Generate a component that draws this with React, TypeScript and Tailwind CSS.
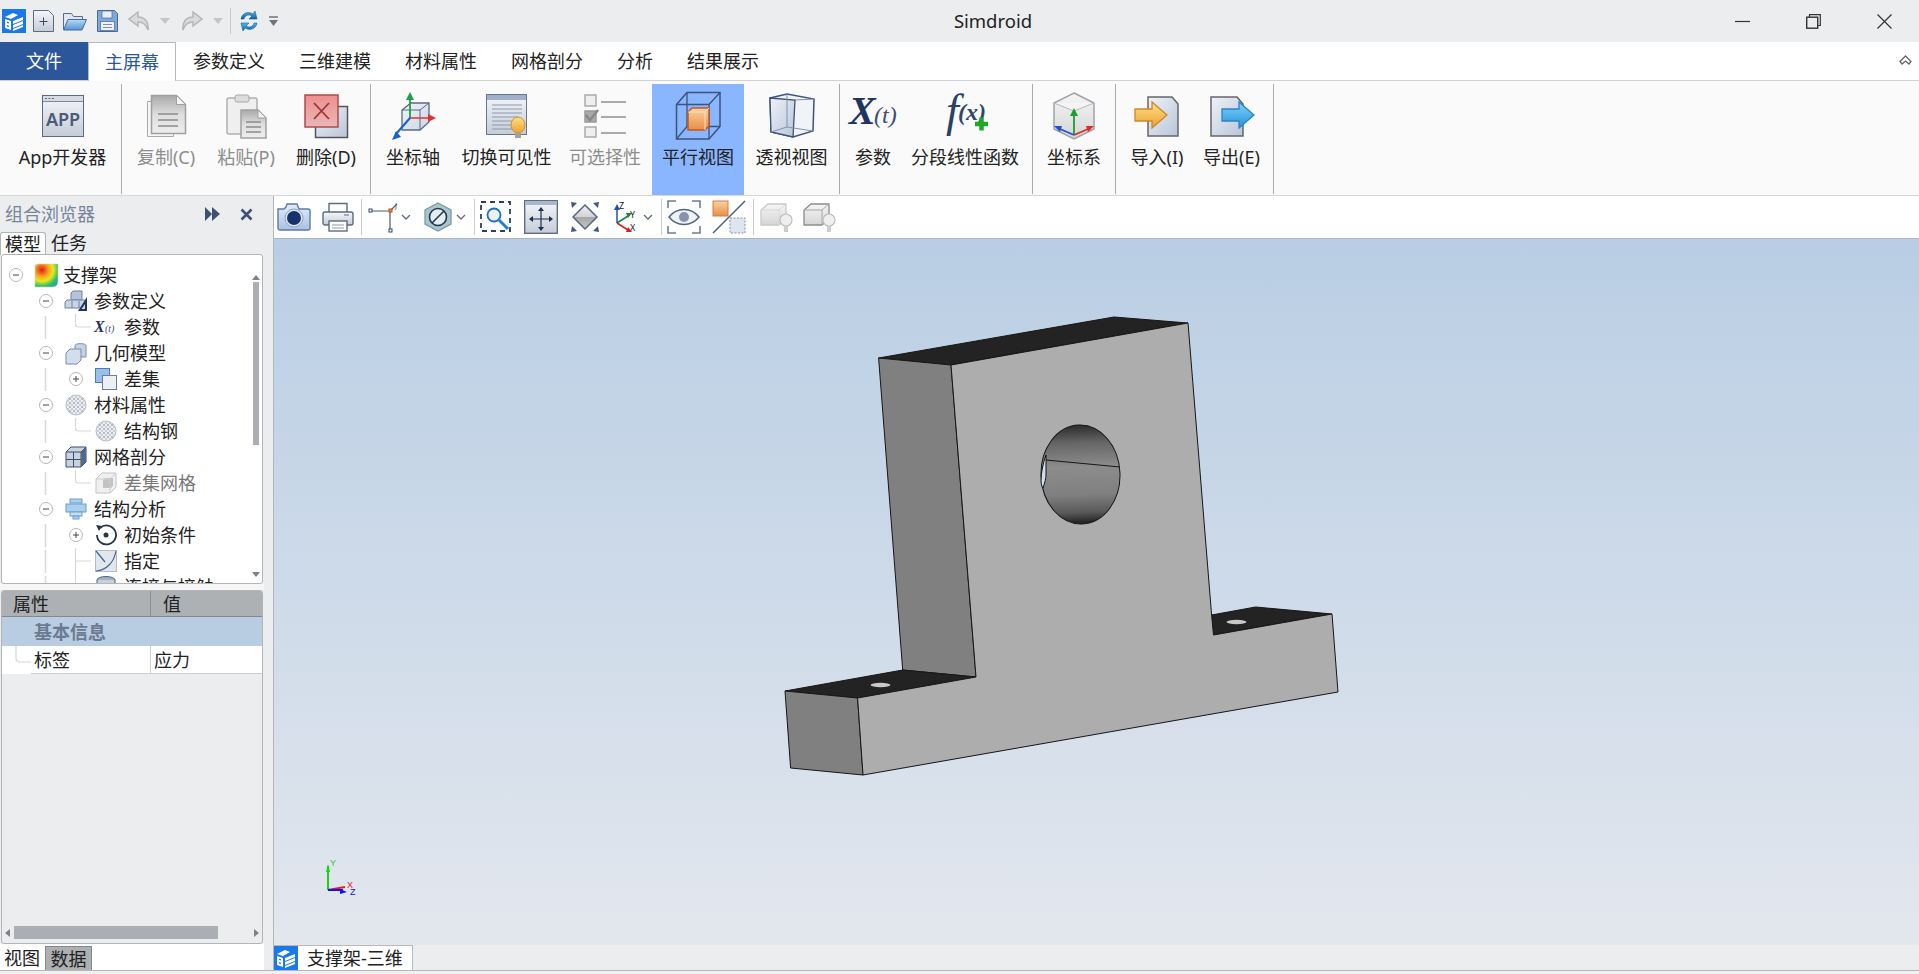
import React from "react";

const EDGE = "#5b6b86";

const Defs = () => (
  <svg width="0" height="0" className="absolute">
    <defs>
      <linearGradient id="gPaper" x1="0" y1="0" x2="0" y2="1">
        <stop offset="0" stopColor="#f4f6f9" />
        <stop offset="1" stopColor="#c5ccd8" />
      </linearGradient>
      <linearGradient id="gGray" x1="0" y1="0" x2="0" y2="1">
        <stop offset="0" stopColor="#a9a9a9" />
        <stop offset="0.5" stopColor="#dedede" />
        <stop offset="1" stopColor="#eeeeee" />
      </linearGradient>
      <linearGradient id="gLight" x1="0" y1="0" x2="0" y2="1">
        <stop offset="0" stopColor="#f6f6f6" />
        <stop offset="1" stopColor="#d5d5d5" />
      </linearGradient>
      <linearGradient id="gRed" x1="0" y1="0" x2="0" y2="1">
        <stop offset="0" stopColor="#ee8f8f" />
        <stop offset="1" stopColor="#e9b7b7" />
      </linearGradient>
      <linearGradient id="gOrange" x1="0" y1="0" x2="0" y2="1">
        <stop offset="0" stopColor="#f8d3a5" />
        <stop offset="1" stopColor="#ea8d45" />
      </linearGradient>
      <linearGradient id="gArrow" x1="0" y1="0" x2="0" y2="1">
        <stop offset="0" stopColor="#fde08a" />
        <stop offset="1" stopColor="#f0a030" />
      </linearGradient>
      <linearGradient id="gArrowBlue" x1="0" y1="0" x2="0" y2="1">
        <stop offset="0" stopColor="#7fd4f7" />
        <stop offset="1" stopColor="#2790dc" />
      </linearGradient>
      <linearGradient id="gGlass" x1="0" y1="0" x2="1" y2="1">
        <stop offset="0" stopColor="#eef2f8" />
        <stop offset="1" stopColor="#b8c5d9" />
      </linearGradient>
      <linearGradient id="gCam" x1="0" y1="0" x2="0" y2="1">
        <stop offset="0" stopColor="#e3ecf8" />
        <stop offset="1" stopColor="#a9c2e2" />
      </linearGradient>
      <linearGradient id="gFolder" x1="0" y1="0" x2="0" y2="1">
        <stop offset="0" stopColor="#bcd8f2" />
        <stop offset="1" stopColor="#4f97d6" />
      </linearGradient>
      <linearGradient id="gSync" x1="0" y1="0" x2="0" y2="1">
        <stop offset="0" stopColor="#4dc0ea" />
        <stop offset="1" stopColor="#155f9f" />
      </linearGradient>
      <linearGradient id="gDiamond" x1="0" y1="0" x2="0" y2="1">
        <stop offset="0" stopColor="#f2f2f2" />
        <stop offset="0.5" stopColor="#d2d2d2" />
        <stop offset="0.5" stopColor="#a5a5a5" />
        <stop offset="1" stopColor="#c8c8c8" />
      </linearGradient>
      <linearGradient id="gHole" x1="0" y1="0" x2="0" y2="1">
        <stop offset="0" stopColor="#2c2c2c" />
        <stop offset="0.18" stopColor="#666666" />
        <stop offset="0.42" stopColor="#8c8c8c" />
        <stop offset="0.7" stopColor="#808080" />
        <stop offset="0.88" stopColor="#5a5a5a" />
        <stop offset="1" stopColor="#1c1c1c" />
      </linearGradient>
      <radialGradient id="gHeat" cx="0.3" cy="0.25" r="1">
        <stop offset="0" stopColor="#e8141c" />
        <stop offset="0.3" stopColor="#f6a81c" />
        <stop offset="0.5" stopColor="#e8e820" />
        <stop offset="0.72" stopColor="#30c060" />
        <stop offset="1" stopColor="#2090e8" />
      </radialGradient>
      <pattern id="pDots" width="4" height="4" patternUnits="userSpaceOnUse">
        <rect width="4" height="4" fill="#eceef2" />
        <rect width="2" height="2" fill="#b7bdc8" />
        <rect x="2" y="2" width="2" height="2" fill="#c9ced7" />
      </pattern>
    </defs>
  </svg>
);

const Logo = ({ size = 24 }: { size?: number }) => (
  <svg width={size} height={size} viewBox="0 0 24 24" className="block shrink-0">
    <rect width="24" height="24" fill="#1a78e8" />
    <path d="M3 8 11 4l5 2-7 4z" fill="#fff" />
    <path d="M3 10l6 2v9l-6-2z" fill="#fff" />
    <path d="M11 12l10-4v3l-10 4zM11 16l10-4v3l-10 4zM11 20l10-4v2l-10 4z" fill="#fff" />
    <path d="M5 12.5l2 .7v1.4l-2-.7zM5 16l2 .7v1.4l-2-.7z" fill="#1a78e8" />
  </svg>
);

/* ---------- title bar icons ---------- */
const NewIcon = () => (
  <svg width="21" height="22" viewBox="0 0 21 22" className="block">
    <path d="M.5.5h15l5 5v16H.5z" fill="url(#gPaper)" stroke={EDGE} />
    <path d="M10.5 7.5v8M6.5 11.5h8" stroke="#3a4a66" />
  </svg>
);
const OpenIcon = () => (
  <svg width="24" height="20" viewBox="0 0 24 20" className="block">
    <path d="M.5 18V2.500h8l2 3h9V9" fill="#dfe7f2" stroke={EDGE} />
    <path d="M.5 19 5 8.500h18.500L19 19z" fill="url(#gFolder)" stroke="#3f6d9e" />
  </svg>
);
const SaveIcon = () => (
  <svg width="21" height="22" viewBox="0 0 21 22" className="block">
    <path d="M.5.5h17l3 3v18H.5z" fill="#7fa9d9" stroke="#46699a" />
    <rect x="5" y="1" width="10" height="7" fill="#e9eff7" stroke="#46699a" strokeWidth=".7" />
    <rect x="3.5" y="11.5" width="14" height="9" fill="#eef2f7" stroke="#46699a" strokeWidth=".7" />
    <path d="M6 14.5h9M6 17.5h9" stroke="#8090a8" />
  </svg>
);
const UndoIcon = ({ flip = false }: { flip?: boolean }) => (
  <svg width="22" height="20" viewBox="0 0 22 20" className={flip ? "block -scale-x-100" : "block"}>
    <path d="M10 1 1 8l9 7v-4c4 0 8 2 10 8 1-8-3-13-10-13z" fill="#d9dadc" stroke="#b5b6b9" strokeWidth="1.5" />
  </svg>
);
const DropArrow = () => (
  <svg width="10" height="6" viewBox="0 0 10 6" className="block">
    <path d="M0 0h10L5 6z" fill="#c4c5c8" />
  </svg>
);
const SyncIcon = () => (
  <svg width="20" height="24" viewBox="0 0 20 24" className="block">
    <path d="M2 10C3 4 9 2 14 5l2-3 2 8-8 0 3-3c-3-2-7-1-8 3z" fill="url(#gSync)" stroke="#125a96" strokeWidth=".6" />
    <path d="M18 14c-1 6-7 8-12 5l-2 3-2-8 8 0-3 3c3 2 7 1 8-3z" fill="url(#gSync)" stroke="#125a96" strokeWidth=".6" />
  </svg>
);
const MoreIcon = () => (
  <svg width="9" height="11" viewBox="0 0 9 11" className="block">
    <path d="M0 1h9" stroke="#70737a" strokeWidth="1.5" />
    <path d="M0 4h9L4.5 10z" fill="#70737a" />
  </svg>
);

/* ---------- ribbon icons, all on a 46px box ---------- */
const AppIcon = () => (
  <svg width="46" height="46" viewBox="0 0 46 46">
    <rect x="2.5" y="2.5" width="41" height="41" fill="url(#gPaper)" stroke={EDGE} />
    <rect x="3" y="3" width="40" height="5" fill="#d6dbe4" />
    <path d="M5 5.5h2M8.5 5.5h2M12 5.5h2" stroke="#5b6b86" />
    <path d="M3 8.500h40" stroke="#7a88a0" />
    <text x="23" y="33" textAnchor="middle" fontSize="18" fontWeight="600" fill="#4a5a78" fontFamily="Noto Sans, sans-serif">APP</text>
  </svg>
);
const CopyIcon = () => (
  <svg width="46" height="46" viewBox="0 0 46 46">
    <path d="M4.5 8.5h26v35h-26z" fill="#f6f6f6" stroke="#aaa" />
    <path d="M8.5 2.5h25l9 9v29h-34z" fill="url(#gGray)" stroke="#a0a0a0" strokeWidth="1.5" />
    <path d="M33.5 2.5v9h9z" fill="#f4f4f4" stroke="#a0a0a0" />
    <path d="M15 21h20M15 27h20M15 33h20" stroke="#8c8c8c" strokeWidth="1.5" />
  </svg>
);
const PasteIcon = () => (
  <svg width="46" height="46" viewBox="0 0 46 46">
    <rect x="4" y="5" width="30" height="36" rx="2" fill="#efefef" stroke="#b0b0b0" strokeWidth="1.5" />
    <rect x="12" y="2" width="14" height="7" rx="2" fill="#dcdcdc" stroke="#a8a8a8" />
    <path d="M18 17h17l8 8v20H18z" fill="url(#gGray)" stroke="#a0a0a0" strokeWidth="1.5" />
    <path d="M35 17v8h8z" fill="#f4f4f4" stroke="#a0a0a0" />
    <path d="M23 29h15M23 34h15M23 39h15" stroke="#8c8c8c" strokeWidth="1.5" />
  </svg>
);
const DeleteIcon = () => (
  <svg width="46" height="46" viewBox="0 0 46 46">
    <rect x="12.5" y="13.5" width="32" height="31" fill="url(#gGlass)" stroke="#555" strokeWidth="1.5" />
    <rect x="2" y="2" width="33" height="32" fill="url(#gRed)" stroke="#b14a4a" strokeWidth="1.5" />
    <path d="M11 10l15 16M26 10 11 26" stroke="#9e3535" strokeWidth="1.8" />
  </svg>
);
const AxisIcon = () => (
  <svg width="46" height="50" viewBox="0 0 46 50">
    <path d="M12 19l9-7h18v19l-9 8H12z" fill="url(#gGlass)" fillOpacity=".7" stroke={EDGE} strokeWidth="1.3" />
    <path d="M12 19h18v20M30 19l9-7" fill="none" stroke={EDGE} />
    <path d="M20 27V8" stroke="#1aa048" strokeWidth="1.8" />
    <path d="M20 1l-4 8h8z" fill="#1aa048" />
    <path d="M20 27h20" stroke="#e03030" strokeWidth="1.5" />
    <path d="M46 27l-8-4v8z" fill="#e03030" />
    <path d="M20 27 6 43" stroke="#1c5fd0" strokeWidth="2" />
    <path d="M2 49l9-3-5-6z" fill="#1c5fd0" />
  </svg>
);
const VisibleIcon = () => (
  <svg width="46" height="46" viewBox="0 0 46 46">
    <rect x="2.5" y="1.5" width="40" height="40" fill="url(#gPaper)" stroke="#667690" />
    <rect x="3" y="2" width="39" height="5" fill="#9fb0c8" />
    <path d="M8 12h30M8 16h30M8 20h30M8 24h26M8 28h24M8 32h22M8 36h22" stroke="#8b98ad" />
    <ellipse cx="34" cy="32" rx="7" ry="8" fill="url(#gArrow)" stroke="#c9932a" />
    <rect x="31" y="40" width="6" height="5" fill="#a0a0a0" />
  </svg>
);
const SelectIcon = () => (
  <svg width="46" height="46" viewBox="0 0 46 46">
    <rect x="3" y="2" width="11" height="11" fill="#eee" stroke="#aaa" strokeWidth="1.5" />
    <rect x="3" y="18" width="11" height="11" fill="#aaa" stroke="#999" strokeWidth="1.5" />
    <path d="M4 22l4 5 8-10" fill="none" stroke="#888" strokeWidth="2.5" />
    <rect x="3" y="34" width="11" height="10" fill="#eee" stroke="#aaa" strokeWidth="1.5" />
    <path d="M19 9h25M19 24h25M19 40h25" stroke="#aaa" strokeWidth="1.8" />
  </svg>
);
const ParallelIcon = () => (
  <svg width="46" height="50" viewBox="0 0 46 50">
    <path d="M1.5 13.5 12 1.5h33v34L34 48H1.5z" fill="none" stroke="#3d5378" strokeWidth="1.5" />
    <path d="M1.5 13.5H34V48M34 13.5 45 1.5M1.5 48 12 35.5h33M12 1.5v34" fill="none" stroke="#3d5378" strokeWidth="1.3" />
    <path d="M13 21l4-4h17v18l-4 4H13z" fill="url(#gOrange)" stroke="#c8551f" strokeWidth="1.5" />
    <path d="M13 21h17v18M30 21l4-4" fill="none" stroke="#f4e0c8" />
  </svg>
);
const PerspectiveIcon = () => (
  <svg width="46" height="46" viewBox="0 0 46 46">
    <path d="M1 5 18 1l27 5-1 32-20 6-22-5z" fill="#f0f3f8" stroke="#3d5378" strokeWidth="1.5" />
    <path d="M1 5l25 2-2 37L2 39z" fill="url(#gGlass)" stroke="#3d5378" strokeWidth="1.3" />
    <path d="M26 7l19-1M18 1v33M2 39l16-5 26 4" fill="none" stroke="#8192ad" />
  </svg>
);
const XtIcon = ({ size = 46 }: { size?: number }) => (
  <svg width={size} height={size} viewBox="0 0 46 46" className="overflow-visible">
    <text x="-1" y="31" fontFamily="Liberation Serif, serif" fontStyle="italic" fontWeight="700" fontSize="40" fill="#1f3560">X</text>
    <text x="24" y="30" fontFamily="Liberation Serif, serif" fontStyle="italic" fontSize="24" fill="#3b4f78">(t)</text>
  </svg>
);
const FxIcon = () => (
  <svg width="50" height="46" viewBox="0 0 50 46" className="overflow-visible">
    <text x="6" y="33" fontFamily="Liberation Serif, serif" fontStyle="italic" fontSize="46" fill="#2d3f66">f</text>
    <text x="18" y="27" fontFamily="Liberation Serif, serif" fontStyle="italic" fontWeight="700" fontSize="24" fill="#33456c">(x)</text>
    <path d="M35 31h13M41.5 24.500v13" stroke="#1da82c" strokeWidth="4.5" />
  </svg>
);
const CoordIcon = () => (
  <svg width="46" height="48" viewBox="0 0 46 48">
    <path d="M23 1 43 11v26L23 47 3 37V11z" fill="url(#gLight)" stroke="#9ea3ab" strokeWidth="1.5" />
    <path d="M3 11l20 8 20-8" fill="#f5f5f5" stroke="#b5b8bd" />
    <path d="M23 43V22" stroke="#18a030" strokeWidth="1.8" />
    <path d="M23 16l-4 8h8z" fill="#18a030" />
    <path d="M23 43 9 37" stroke="#2050d0" strokeWidth="1.8" />
    <path d="M3 34l8-0-2 6z" fill="#2050d0" />
    <path d="M23 43 37 37" stroke="#e02828" strokeWidth="1.8" />
    <path d="M43 34l-8 0 2 6z" fill="#e02828" />
  </svg>
);
const ImportIcon = () => (
  <svg width="46" height="46" viewBox="0 0 46 46">
    <path d="M14 4h24l6 7v32H14z" fill="url(#gGlass)" stroke="#666" strokeWidth="1.5" />
    <path d="M1 16h17v-7l15 13-15 13v-7H1z" fill="url(#gArrow)" stroke="#c88a2a" strokeWidth="1.3" />
  </svg>
);
const ExportIcon = () => (
  <svg width="46" height="46" viewBox="0 0 46 46">
    <path d="M2 4h26l6 7v32H2z" fill="url(#gGlass)" stroke="#666" strokeWidth="1.5" />
    <path d="M13 16h17v-7l15 13-15 13v-7H13z" fill="url(#gArrowBlue)" stroke="#2b84c6" strokeWidth="1.3" />
  </svg>
);

type RibbonItem = {
  label: string;
  w: string;
  icon: React.ReactNode;
  disabled?: boolean;
  active?: boolean;
};

const groups: RibbonItem[][] = [
  [{ label: "App开发器", w: "w-[121px] pl-1", icon: <AppIcon /> }],
  [
    { label: "复制(C)", w: "w-[88px]", icon: <CopyIcon />, disabled: true },
    { label: "粘贴(P)", w: "w-[72px]", icon: <PasteIcon />, disabled: true },
    { label: "删除(D)", w: "w-[88px]", icon: <DeleteIcon /> },
  ],
  [
    { label: "坐标轴", w: "w-[84px]", icon: <AxisIcon /> },
    { label: "切换可见性", w: "w-[103px]", icon: <VisibleIcon /> },
    { label: "可选择性", w: "w-[94px]", icon: <SelectIcon />, disabled: true },
    { label: "平行视图", w: "w-[92px]", icon: <ParallelIcon />, active: true },
    { label: "透视视图", w: "w-[95px]", icon: <PerspectiveIcon /> },
  ],
  [
    { label: "参数", w: "w-[66px]", icon: <XtIcon /> },
    { label: "分段线性函数", w: "w-[126px] pr-2", icon: <FxIcon /> },
  ],
  [{ label: "坐标系", w: "w-[82px]", icon: <CoordIcon /> }],
  [
    { label: "导入(I)", w: "w-[82px]", icon: <ImportIcon /> },
    { label: "导出(E)", w: "w-[75px] pr-2", icon: <ExportIcon /> },
  ],
];

const tabs = [
  { title: "参数定义", w: "w-[106px]" },
  { title: "三维建模", w: "w-[106px]" },
  { title: "材料属性", w: "w-[106px]" },
  { title: "网格剖分", w: "w-[106px]" },
  { title: "分析", w: "w-[70px]" },
  { title: "结果展示", w: "w-[106px]" },
];

const TitleBar = () => (
  <div className="flex items-center h-[42px] bg-[#ecedef] shrink-0 pl-[2px]">
    <Logo />
    <div className="ml-[7px]"><NewIcon /></div>
    <div className="ml-[9px]"><OpenIcon /></div>
    <div className="ml-[10px]"><SaveIcon /></div>
    <div className="ml-[10px]"><UndoIcon /></div>
    <div className="ml-[10px]"><DropArrow /></div>
    <div className="ml-[11px]"><UndoIcon flip /></div>
    <div className="ml-[10px]"><DropArrow /></div>
    <div className="ml-[7px] w-px h-[26px] bg-[#c8c9cc]" />
    <div className="ml-[8px]"><SyncIcon /></div>
    <div className="ml-[10px]"><MoreIcon /></div>
    <div className="ml-[675px] text-[18.5px] leading-[24px] text-[#222] w-[80px] text-center">Simdroid</div>
    <div className="ml-auto flex items-center pr-[27px]">
      <svg width="15" height="15" viewBox="0 0 15 15" className="block">
        <path d="M0 7.5h15" stroke="#333" strokeWidth="1.2" />
      </svg>
      <svg width="15" height="15" viewBox="0 0 15 15" className="block ml-[56px]">
        <path d="M3.5 3V.7h10.800v10.800H12" fill="none" stroke="#333" strokeWidth="1.2" />
        <rect x=".7" y="3.2" width="11" height="11" fill="none" stroke="#333" strokeWidth="1.4" />
      </svg>
      <svg width="15" height="15" viewBox="0 0 15 15" className="block ml-[56px]">
        <path d="M.5.5l14 14M14.5.5l-14 14" stroke="#333" strokeWidth="1.2" />
      </svg>
    </div>
  </div>
);

const TabRow = () => (
  <div className="flex h-[39px] shrink-0 bg-white border-b border-[#d2d3d5] text-[18px] leading-[24px] text-[#222]">
    <div className="w-[88px] h-[38px] bg-[#2b579a] text-white flex items-center justify-center">文件</div>
    <div className="w-[88px] h-[39px] bg-white border border-b-0 border-[#b9babd] flex items-center justify-center text-[#2b579a] relative">
      主屏幕
    </div>
    {tabs.map((tab) => (
      <div key={tab.title} className={`${tab.w} flex items-center justify-center`}>
        {tab.title}
      </div>
    ))}
    <div className="ml-auto pr-[7px] flex items-center">
      <svg width="13" height="12" viewBox="0 0 13 12" className="block">
        <path d="M1 6.5 6.5 1 12 6.500 10 9 6.500 6 3 9z" fill="#fff" stroke="#666" strokeWidth="1.3" />
      </svg>
    </div>
  </div>
);

const Ribbon = () => (
  <div className="flex h-[115px] shrink-0 bg-[#fafafa] border-b border-[#d6d7d9] pt-[3px]">
    {groups.map((group, i) => (
      <div key={i} className="flex h-[110px] border-r border-[#a9abae]">
        {group.map((item) => (
          <div
            key={item.label}
            className={`${item.w} flex flex-col items-center pt-[6px] ${item.active ? "bg-[#89b6ff] h-[111px]" : "h-[110px]"}`}
          >
            <div className="h-[52px] flex items-center justify-center">{item.icon}</div>
            <div
              className={`mt-[3px] text-[18px] leading-[24px] whitespace-nowrap ${item.disabled ? "text-[#8d8d8d]" : "text-[#222]"}`}
            >
              {item.label}
            </div>
          </div>
        ))}
      </div>
    ))}
  </div>
);

/* ---------- viewport toolbar ---------- */
const Chevron = () => (
  <svg width="10" height="6" viewBox="0 0 10 6" className="block">
    <path d="M1 1l4 4 4-4" fill="none" stroke="#5f6b7c" strokeWidth="1.3" />
  </svg>
);
const ToolSep = () => <div className="w-px h-[36px] bg-[#c9cbce]" />;

const Toolbar = () => (
  <div className="flex items-center h-[43px] shrink-0 bg-white border-b border-[#aeb4bd]">
    <svg width="34" height="28" viewBox="0 0 34 28" className="block ml-[3px]">
      <path d="M1 6h6l2-2 1-3h10l2 5h9a2 2 0 0 1 2 2v17a2 2 0 0 1-2 2H3a2 2 0 0 1-2-2z" fill="url(#gCam)" stroke="#5d7ba3" strokeWidth="1.4" />
      <circle cx="17" cy="15" r="9" fill="#dfe7f3" stroke="#8ba2c4" />
      <circle cx="17" cy="15" r="7" fill="#17336b" />
    </svg>
    <svg width="32" height="30" viewBox="0 0 32 30" className="block ml-[11px]">
      <path d="M7 11V1.500h18V11" fill="#fff" stroke="#5c6c82" strokeWidth="1.4" />
      <rect x="1" y="10" width="30" height="13" rx="2" fill="url(#gPaper)" stroke="#5c6c82" strokeWidth="1.4" />
      <path d="M22 13h5" stroke="#5c6c82" />
      <rect x="7" y="19" width="18" height="10" fill="#fff" stroke="#5c6c82" strokeWidth="1.4" />
      <path d="M10 23h12M10 26h12" stroke="#8a98ac" />
    </svg>
    <div className="ml-[7px]"><ToolSep /></div>
    <svg width="32" height="32" viewBox="0 0 32 32" className="block ml-[6px]">
      <path d="M4 10h20M22 11v18M23 9l6-6" fill="none" stroke="#4a5a72" strokeWidth="1.2" />
      <rect x="1" y="8" width="3" height="3" fill="#fff" stroke="#34465f" />
      <rect x="21" y="8" width="3" height="3" fill="#ee8a3c" stroke="#b3521c" />
      <rect x="21" y="28" width="3" height="3" fill="#fff" stroke="#34465f" />
      <text x="27" y="7" fontSize="7" fill="#34465f" fontFamily="Noto Sans, sans-serif">J</text>
    </svg>
    <div className="ml-[1px]"><Chevron /></div>
    <svg width="28" height="30" viewBox="0 0 28 30" className="block ml-[13px]">
      <path d="M14 1 27 8v14l-13 7L1 22V8z" fill="#a9c6cc" stroke="#7b9ba3" strokeWidth="1.3" />
      <circle cx="14" cy="15" r="8.5" fill="#e4eef0" stroke="#25384d" strokeWidth="1.6" />
      <path d="M8 21 20 9" stroke="#25384d" strokeWidth="1.6" />
    </svg>
    <div className="ml-[4px]"><Chevron /></div>
    <div className="ml-[8px]"><ToolSep /></div>
    <svg width="32" height="32" viewBox="0 0 32 32" className="block ml-[5px]">
      <rect x="1" y="1" width="29" height="29" fill="none" stroke="#2d3f5e" strokeWidth="1.8" strokeDasharray="5 4" />
      <circle cx="14" cy="14" r="6.5" fill="#e9f2fb" stroke="#1f6fb8" strokeWidth="1.8" />
      <path d="M19 19l9 9" stroke="#1f7fd0" strokeWidth="3" />
    </svg>
    <svg width="34" height="34" viewBox="0 0 34 34" className="block ml-[12px]">
      <rect x=".7" y=".7" width="32.600" height="32.600" fill="url(#gPaper)" stroke="#56667f" strokeWidth="1.3" />
      <rect x="1" y="1" width="32" height="4" fill="#a9b7cb" />
      <path d="M17 10v18M8 19h18" stroke="#1d2f4c" strokeWidth="1.2" />
      <path d="M17 7l-3 4h6zM17 31l-3-4h6zM5 19l4-3v6zM29 19l-4-3v6z" fill="#1d2f4c" />
    </svg>
    <svg width="30" height="32" viewBox="0 0 30 32" className="block ml-[12px]">
      <path d="M15 4 27 16 15 28 3 16z" fill="url(#gDiamond)" stroke="#546682" strokeWidth="1.5" />
      <path d="M1 1l6 1-5 5zM29 1l-6 1 5 5zM1 31l6-1-5-5zM29 31l-6-1 5-5z" fill="#3f5a82" />
    </svg>
    <svg width="28" height="32" viewBox="0 0 28 32" className="block ml-[10px]">
      <path d="M7 22V8" stroke="#1c54b0" strokeWidth="1.5" />
      <path d="M7 3 4 9h6z" fill="#1c54b0" />
      <path d="M7 22l11-7" stroke="#12893c" strokeWidth="1.5" />
      <path d="M22 12l-6 0 2 5z" fill="#12893c" />
      <path d="M7 22l11 7" stroke="#d82020" strokeWidth="1.5" />
      <path d="M22 31l-6-0 2-5z" fill="#d82020" />
      <text x="9" y="8" fontSize="9" fill="#222" fontFamily="Noto Sans, sans-serif">Z</text>
      <text x="20" y="17" fontSize="9" fill="#222" fontFamily="Noto Sans, sans-serif">Y</text>
      <text x="20" y="30" fontSize="9" fill="#222" fontFamily="Noto Sans, sans-serif">X</text>
    </svg>
    <div className="ml-[5px]"><Chevron /></div>
    <div className="ml-[8px]"><ToolSep /></div>
    <svg width="34" height="34" viewBox="0 0 34 34" className="block ml-[5px]">
      <path d="M1 8V1h8M25 1h8v7M33 26v7h-8M9 33H1v-7" fill="none" stroke="#6d7f98" strokeWidth="1.6" />
      <path d="M2 17c8-10 22-10 30 0-8 10-22 10-30 0z" fill="#eef2f7" stroke="#52647f" strokeWidth="1.5" />
      <circle cx="17" cy="17" r="5" fill="#8794a8" />
    </svg>
    <svg width="34" height="34" viewBox="0 0 34 34" className="block ml-[11px]">
      <rect x="1" y="1" width="15" height="15" fill="url(#gOrange)" stroke="#cf7f45" />
      <path d="M1 33 33 1" stroke="#4a5c7c" strokeWidth="1.5" />
      <rect x="18" y="18" width="15" height="15" fill="#dfe5ef" stroke="#8191aa" strokeDasharray="2 1.5" />
    </svg>
    <div className="ml-[7px]"><ToolSep /></div>
    <svg width="34" height="32" viewBox="0 0 34 32" className="block ml-[5px]">
      <path d="M2 9l7-6h18v15l-7 6H2z" fill="url(#gLight)" stroke="#c9c9c9" strokeWidth="1.3" />
      <path d="M2 9h18v15M20 9l7-6" fill="none" stroke="#d8d8d8" />
      <circle cx="27" cy="19" r="6" fill="#efefef" stroke="#bdbdbd" strokeWidth="1.2" />
      <rect x="25" y="25" width="4" height="6" fill="#cdcdcd" />
    </svg>
    <svg width="34" height="32" viewBox="0 0 34 32" className="block ml-[9px]">
      <path d="M2 9l7-6h18v15l-7 6H2z" fill="url(#gLight)" stroke="#8c8c8c" strokeWidth="1.3" />
      <path d="M2 9h18v15M20 9l7-6" fill="none" stroke="#a8a8a8" />
      <circle cx="27" cy="19" r="6" fill="#efefef" stroke="#bdbdbd" strokeWidth="1.2" />
      <rect x="25" y="25" width="4" height="6" fill="#cdcdcd" />
    </svg>
  </div>
);

/* ---------- model in the viewport ---------- */
const Model = () => (
  <svg viewBox="274 239 1645 706" preserveAspectRatio="xMinYMin meet" className="absolute inset-0 w-full h-full">
    <g stroke="#161616" strokeWidth="1" strokeLinejoin="round">
      <path d="M878.6 358 1114 317 1188 323 951 365z" fill="#232323" />
      <path d="M878.6 358 951 365 976 677 902.7 670z" fill="#808080" />
      <path d="M785 691 902.7 670 976 677 857.6 698z" fill="#232323" />
      <path d="M1211.6 615 1255.6 607 1332 614 1213.5 635z" fill="#232323" />
      <path d="M785 691 857.6 698 863 775 790.6 768z" fill="#808080" />
      <path d="M951 365 1188 323 1211.6 615 1213.5 635 1332 614 1338 692 863 775 857.6 698 976 677z" fill="#adadad" />
      <ellipse cx="1080.5" cy="474.5" rx="39.5" ry="49.5" fill="url(#gHole)" transform="rotate(-2 1080.5 474.5)" />
      <path d="M1046 455c-3 8-5 18-5 26 0 3 1 6 2 7 2-6 3-9 3-14z" fill="#cfdcea" />
      <path d="M1046 460 1120 467" fill="none" />
    </g>
    <ellipse cx="880.5" cy="685" rx="10" ry="2.2" fill="#c9c9c9" />
    <ellipse cx="1236.5" cy="622" rx="10" ry="2.2" fill="#c9c9c9" />
    {/* view triad */}
    <path d="M328 890V866" stroke="#14d414" strokeWidth="2" />
    <path d="M328 864l-2 8h4z" fill="#14d414" />
    <path d="M328 890l17-3" stroke="#f01818" strokeWidth="2" />
    <path d="M328 890h15" stroke="#1414e0" strokeWidth="2" />
    <path d="M347 892l-7-3v5z" fill="#1414e0" />
    <text x="330" y="866" fontSize="9" fill="#14d414" fontFamily="Liberation Sans, sans-serif">Y</text>
    <text x="347" y="888" fontSize="9" fill="#f01818" fontFamily="Liberation Sans, sans-serif">X</text>
    <text x="350" y="895" fontSize="9" fill="#1414e0" fontFamily="Liberation Sans, sans-serif">Z</text>
  </svg>
);

/* ---------- tree ---------- */
const TI = ({ children }: { children: React.ReactNode }) => (
  <svg width="22" height="22" viewBox="0 0 22 22" className="block shrink-0 overflow-visible">
    {children}
  </svg>
);
const HeatIcon = () => (
  <TI>
    <path d="M0 3Q0 0 3 0h20v17q0 6-6 6H0z" fill="url(#gHeat)" stroke="#c9ccd2" strokeWidth=".6" />
  </TI>
);
const ParamGroupIcon = () => (
  <TI>
    <path d="M6 3l2-2h9v9H6z" fill="#b5c4da" stroke="#6f82a0" />
    <path d="M0 18v-6l2-2h18v8z" fill="#c8d3e3" stroke="#6f82a0" />
    <path d="M7 11v7M14 11v7" stroke="#6f82a0" />
    <path d="M22 7v14H13z" fill="#1f3560" />
    <path d="M20 14v5h-3.5z" fill="#cfd8e6" />
  </TI>
);
const XtSmall = () => (
  <TI>
    <text x="-1" y="16" fontFamily="Liberation Serif, serif" fontStyle="italic" fontWeight="700" fontSize="16" fill="#1f3560">X</text>
    <text x="10" y="15.500" fontFamily="Liberation Serif, serif" fontStyle="italic" fontSize="10" fill="#3b4f78">(t)</text>
  </TI>
);
const SolidsIcon = () => (
  <TI>
    <path d="M10 3.500C10 1 21 1 21 3.500V15H10z" fill="#c5d3e6" stroke="#7a8da9" />
    <path d="M1 11l4-4h11v11l-4 4H1z" fill="#d3deed" stroke="#7a8da9" />
  </TI>
);
const DiffIcon = () => (
  <TI>
    <rect x=".5" y=".5" width="14" height="14" fill="#97c1ea" stroke="#4e7cac" />
    <rect x="7.5" y="7.5" width="14" height="14" fill="#eceff4" stroke="#6c7d98" />
  </TI>
);
const MatIcon = () => (
  <TI>
    <circle cx="11" cy="11" r="10" fill="url(#pDots)" stroke="#b9bec8" />
  </TI>
);
const MeshIcon = () => (
  <TI>
    <path d="M1 6l5-5h15v15l-5 5H1z" fill="#c9d2e0" stroke="#3d4e6c" />
    <path d="M1 6h15v15M16 6l5-5M8.5 6v15M1 13.5h15" fill="none" stroke="#3d4e6c" />
    <path d="M16 6l5-5v15l-5 5z" fill="#56688a" />
  </TI>
);
const MeshGrayIcon = () => (
  <TI>
    <path d="M1 7l6-6h14v14l-6 6H1z" fill="#f0f0f0" stroke="#c3c3c3" />
    <path d="M8 8l2-2h8v8l-2 2H8z" fill="#c2c2c2" />
    <path d="M1 7h14v14M15 7l6-6" fill="none" stroke="#cfcfcf" />
  </TI>
);
const AnalysisIcon = () => (
  <TI>
    <rect x="5" y="1" width="12" height="4" fill="#a8d0ef" stroke="#6c9dc5" />
    <rect x="1" y="6" width="20" height="8" fill="#a8d0ef" stroke="#6c9dc5" />
    <rect x="5" y="14" width="12" height="4" fill="#c7dff3" stroke="#6c9dc5" />
    <rect x="8" y="18" width="6" height="3" fill="#a8d0ef" stroke="#6c9dc5" />
  </TI>
);
const InitIcon = () => (
  <TI>
    <path d="M5 4a9.5 9.5 0 1 1-3 7" fill="none" stroke="#26344e" strokeWidth="1.8" />
    <path d="M1 1l6 1-3 5z" fill="#26344e" />
    <circle cx="11" cy="11" r="2.5" fill="#26344e" />
  </TI>
);
const AssignIcon = () => (
  <TI>
    <rect x=".5" y=".5" width="21" height="21" fill="#e2e6ed" stroke="#b5bcc8" />
    <path d="M1 1l9 11M1 21C12 20 19 12 21 1" fill="none" stroke="#46648f" strokeWidth="1.2" />
  </TI>
);
const ContactIcon = () => (
  <TI>
    <ellipse cx="11" cy="4" rx="9" ry="3.5" fill="#9fb0c2" stroke="#4f6479" />
    <path d="M2 4v14h18V4" fill="#c5d0db" stroke="#4f6479" />
  </TI>
);

type TreeRow = {
  text: string;
  level: 0 | 1 | 2;
  icon: React.ReactNode;
  expander?: "minus" | "plus";
  trunk?: boolean;
  branch?: "end" | "tee";
  muted?: boolean;
};

const treeRows: TreeRow[] = [
  { text: "支撑架", level: 0, icon: <HeatIcon />, expander: "minus" },
  { text: "参数定义", level: 1, icon: <ParamGroupIcon />, expander: "minus" },
  { text: "参数", level: 2, icon: <XtSmall />, trunk: true, branch: "end" },
  { text: "几何模型", level: 1, icon: <SolidsIcon />, expander: "minus" },
  { text: "差集", level: 2, icon: <DiffIcon />, trunk: true, expander: "plus" },
  { text: "材料属性", level: 1, icon: <MatIcon />, expander: "minus" },
  { text: "结构钢", level: 2, icon: <MatIcon />, trunk: true, branch: "end" },
  { text: "网格剖分", level: 1, icon: <MeshIcon />, expander: "minus" },
  { text: "差集网格", level: 2, icon: <MeshGrayIcon />, trunk: true, branch: "end", muted: true },
  { text: "结构分析", level: 1, icon: <AnalysisIcon />, expander: "minus" },
  { text: "初始条件", level: 2, icon: <InitIcon />, trunk: true, expander: "plus" },
  { text: "指定", level: 2, icon: <AssignIcon />, trunk: true, branch: "tee" },
  { text: "连接与接触", level: 2, icon: <ContactIcon />, trunk: true, branch: "tee" },
];

const gutterW = [33, 63, 93];
const expanderX = [14, 44, 74];
const textGap = ["ml-[6px]", "ml-[7px]", "ml-[7px]"];

const Row = ({ row }: { row: TreeRow }) => (
  <div className="flex items-center h-[26px]">
    <svg width={gutterW[row.level]} height="26" className="block shrink-0">
      {row.trunk && <path d="M43.5 2v23" stroke="#d8d8d8" strokeWidth="1.5" />}
      {row.branch === "end" && <path d="M73.5 0v10q0 3 3 3H89" fill="none" stroke="#d8d8d8" strokeWidth="1.2" />}
      {row.branch === "tee" && <path d="M73.5 0v26M73.5 13H89" fill="none" stroke="#d8d8d8" strokeWidth="1.2" />}
      {row.expander && (
        <g>
          <circle cx={expanderX[row.level]} cy="13" r="6.5" fill="#fff" stroke="#b8b8b8" />
          <path d={`M${expanderX[row.level] - 3} 13h6`} stroke="#444" />
          {row.expander === "plus" && <path d={`M${expanderX[row.level]} 10v6`} stroke="#444" />}
        </g>
      )}
    </svg>
    {row.icon}
    <span className={`${textGap[row.level]} whitespace-nowrap ${row.muted ? "text-[#777]" : "text-[#222]"}`}>
      {row.text}
    </span>
  </div>
);

const TreeBox = () => (
  <div className="relative h-[330px] mx-px bg-white border border-[#b2b4b7] rounded-[3px] overflow-hidden text-[18px] leading-[24px] pt-[7px]">
    {treeRows.map((row) => (
      <Row key={row.text} row={row} />
    ))}
    {/* scrollbar */}
    <div className="absolute right-[3px] top-0 bottom-0 w-[7px] flex flex-col items-center bg-white">
      <svg width="8" height="5" viewBox="0 0 8 5" className="block mt-[20px]">
        <path d="M0 5h8L4 0z" fill="#7d8288" />
      </svg>
      <div className="w-[6px] h-[163px] mt-[2px] bg-[#abafb3]" />
      <svg width="8" height="5" viewBox="0 0 8 5" className="block mt-auto mb-[6px]">
        <path d="M0 0h8L4 5z" fill="#7d8288" />
      </svg>
    </div>
  </div>
);

const PropsPanel = () => (
  <div className="relative h-[354px] mx-px bg-[#ecedef] border border-[#b2b4b7] rounded-[3px] overflow-hidden text-[18px] leading-[24px]">
    <div className="flex items-center h-[26px] bg-[#aeb1b4] border-b border-[#85888c] text-[#222]">
      <div className="w-[149px] h-full flex items-center pl-[11px] border-r border-[#8e9194]">属性</div>
      <div className="pl-[12px]">值</div>
    </div>
    <div className="flex items-center h-[29px] bg-[#b9cde2] pl-[32px] font-bold text-[#6b7a90]">基本信息</div>
    <div className="flex h-[28px] bg-white">
      <svg width="29" height="28" className="block shrink-0">
        <path d="M14 0v12q0 4 4 4h11" fill="none" stroke="#d5d5d5" strokeWidth="1.2" />
      </svg>
      <div className="w-[120px] flex items-center pl-[3px] border-r border-b border-[#ccced1] text-[#222]">标签</div>
      <div className="flex-1 flex items-center pl-[3px] border-b border-[#ccced1] text-[#222]">应力</div>
    </div>
    {/* horizontal scrollbar */}
    <div className="absolute left-[3px] right-[3px] bottom-[4px] h-[13px] flex items-center">
      <svg width="5" height="8" viewBox="0 0 5 8" className="block">
        <path d="M5 0v8L0 4z" fill="#7d8288" />
      </svg>
      <div className="ml-[4px] w-[204px] h-[13px] bg-[#abafb3]" />
      <svg width="5" height="8" viewBox="0 0 5 8" className="block ml-auto">
        <path d="M0 0v8l5-4z" fill="#7d8288" />
      </svg>
    </div>
  </div>
);

const LeftPanel = () => (
  <div className="w-[273px] shrink-0 flex flex-col bg-[#ecedef]">
    <div className="w-[264px] flex flex-col">
      <div className="flex items-center h-[36px] pl-[5px] text-[18px] leading-[24px] text-[#75869a]">
        组合浏览器
        <svg width="15" height="14" viewBox="0 0 15 14" className="block ml-[110px]">
          <path d="M0 0l7 7-7 7zM7 0l8 7-8 7z" fill="#3f5170" />
        </svg>
        <svg width="13" height="13" viewBox="0 0 13 13" className="block ml-[20px]">
          <path d="M1.5 1.5l10 10M11.5 1.5l-10 10" stroke="#3f5170" strokeWidth="2.6" />
        </svg>
      </div>
      <div className="flex h-[23px] -mb-px relative text-[18px] leading-[22px] text-[#222]">
        <div className="w-[46px] h-[23px] bg-white border border-b-0 border-[#b2b4b7] rounded-t-[3px] text-center">模型</div>
        <div className="ml-[5px]">任务</div>
      </div>
      <TreeBox />
      <div className="h-[6px] bg-[#f6f6f7]" />
      <PropsPanel />
      <div className="flex h-[26px] bg-white text-[18px] leading-[24px] text-[#222] pt-[2px]">
        <div className="pl-[4px] w-[45px]">视图</div>
        <div className="w-[47px] h-[24px] bg-[#adb0b3] border border-b-0 border-[#85888c] text-center">数据</div>
      </div>
    </div>
  </div>
);

const Viewport = () => (
  <div className="flex-1 min-w-0 flex flex-col border-l border-[#b4b6b9]">
    <Toolbar />
    <div className="relative flex-1 min-h-0 bg-gradient-to-b from-[#b9cee4] to-[#e3e7ee] overflow-hidden">
      <Model />
    </div>
    <div className="flex h-[25px] shrink-0 bg-[#ecedef] text-[18px] leading-[24px] text-[#222]">
      <div className="flex items-center w-[139px] h-[25px] bg-white border-t border-r border-[#b9babd]">
        <Logo size={24} />
        <span className="ml-[9px] whitespace-nowrap">支撑架-三维</span>
      </div>
    </div>
  </div>
);

const App = () => {
  return (
    <div className="w-screen h-screen flex flex-col overflow-hidden bg-white font-['Noto_Sans','Noto_Sans_CJK_SC',sans-serif]">
      <Defs />
      <TitleBar />
      <TabRow />
      <Ribbon />
      <div className="flex flex-1 min-h-0">
        <LeftPanel />
        <Viewport />
      </div>
      <div className="h-[4px] shrink-0 bg-[#f0f0f0] border-t border-[#b4b6b9]" />
    </div>
  );
};

export default App;
